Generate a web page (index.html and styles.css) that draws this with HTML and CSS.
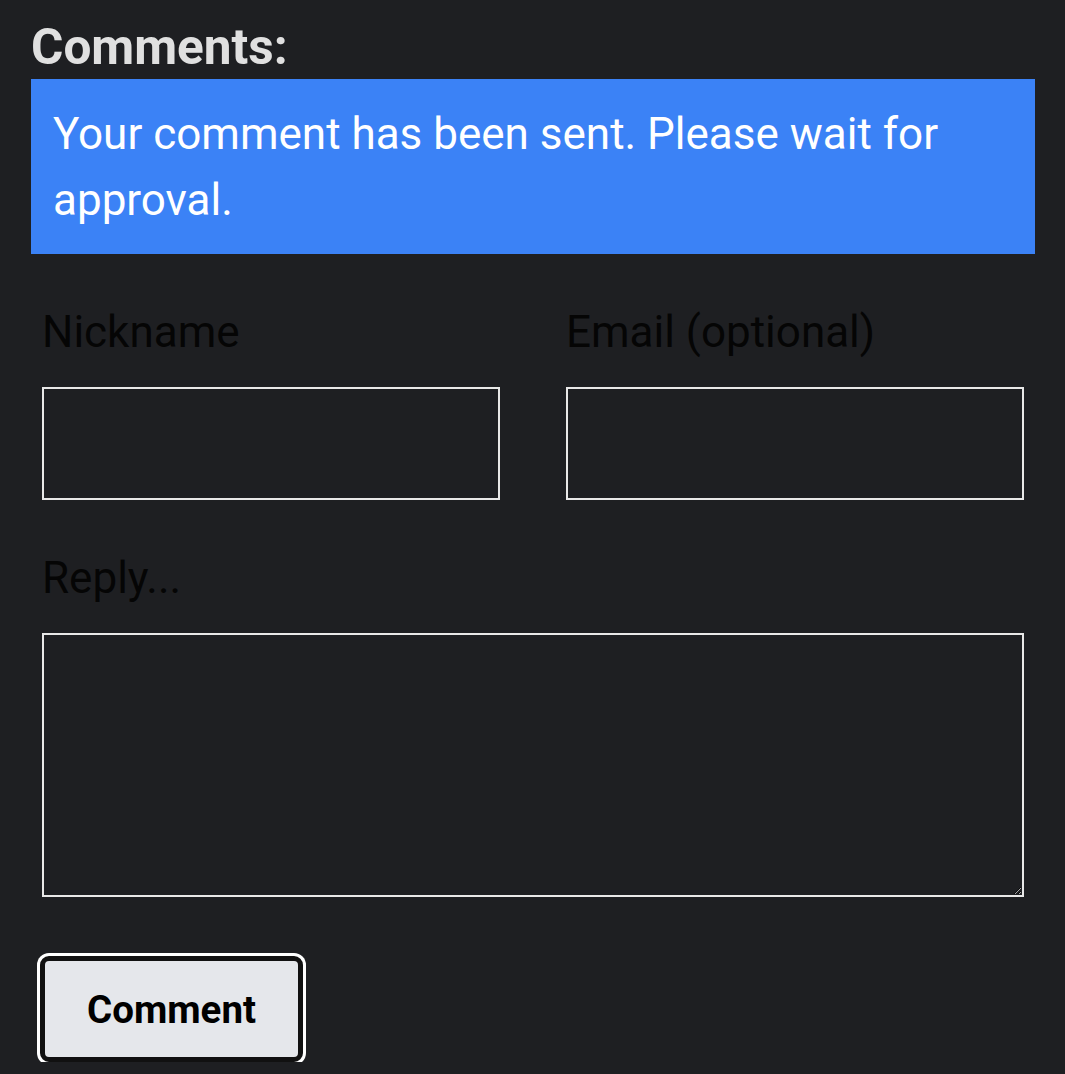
FILE: index.html
```html
<!DOCTYPE html>
<html lang="en">
<head>
<meta charset="utf-8">
<title>Comments</title>
<link rel="stylesheet" href="styles.css">
</head>
<body>
<section class="comments">
  <h2 class="comments-title">Comments:</h2>
  <div class="notice">Your comment has been sent. Please wait for approval.</div>
  <form class="comment-form">
    <div class="field-row">
      <label class="field">
        <span class="field-label">Nickname</span>
        <input class="field-input" type="text">
      </label>
      <label class="field">
        <span class="field-label">Email (optional)</span>
        <input class="field-input" type="email">
      </label>
    </div>
    <label class="field field-reply">
      <span class="field-label">Reply...</span>
      <textarea class="field-textarea"></textarea>
    </label>
    <div class="actions">
      <button class="submit" type="button">Comment</button>
    </div>
  </form>
</section>
</body>
</html>
```

FILE: styles.css
```css
html, body {
  margin: 0;
  padding: 0;
  background: #1e1f22;
}

body {
  font-family: Roboto, "Liberation Sans", sans-serif;
}

.comments {
  padding: 18px 30px 0 31px;
}

.comments-title {
  margin: 0 0 3px 0;
  font-size: 49.5px;
  line-height: 58px;
  font-weight: 700;
  color: #e0e0e0;
}

.notice {
  background: #3b82f6;
  color: #ffffff;
  font-size: 44px;
  line-height: 66px;
  padding: 22px 22px 21px 22px;
}

.comment-form {
  padding: 45px 11px 0 11px;
}

.field-row {
  display: grid;
  grid-template-columns: 1fr 1fr;
  column-gap: 66px;
}

.field {
  display: flex;
  flex-direction: column;
}

.field-label {
  font-size: 44px;
  line-height: 66px;
  color: #050505;
  margin-bottom: 22px;
}

.field-input {
  box-sizing: border-box;
  height: 113px;
  width: 100%;
  margin: 0;
  border: 2px solid #e8e8e8;
  background: transparent;
  color: #e0e0e0;
  font-size: 44px;
  font-family: inherit;
  padding: 0 16px;
  outline: none;
}

.field-reply {
  margin-top: 45px;
}

.field-textarea {
  box-sizing: border-box;
  width: 100%;
  height: 264px;
  margin: 0;
  border: 2px solid #e8e8e8;
  background: transparent;
  color: #e0e0e0;
  font-size: 44px;
  font-family: inherit;
  padding: 8px 16px;
  outline: none;
  resize: vertical;
  display: block;
}

.actions {
  margin-top: 59px;
  margin-left: -2px;
  display: flex;
}

.submit {
  box-sizing: border-box;
  width: 263px;
  height: 106px;
  background: #e5e7eb;
  border: 5px solid #111111;
  border-radius: 9px;
  box-shadow: 0 0 0 3px #ffffff;
  font-family: Roboto, "Liberation Sans", sans-serif;
  font-weight: 700;
  font-size: 38.5px;
  color: #000000;
  padding: 0;
  cursor: pointer;
}
```
